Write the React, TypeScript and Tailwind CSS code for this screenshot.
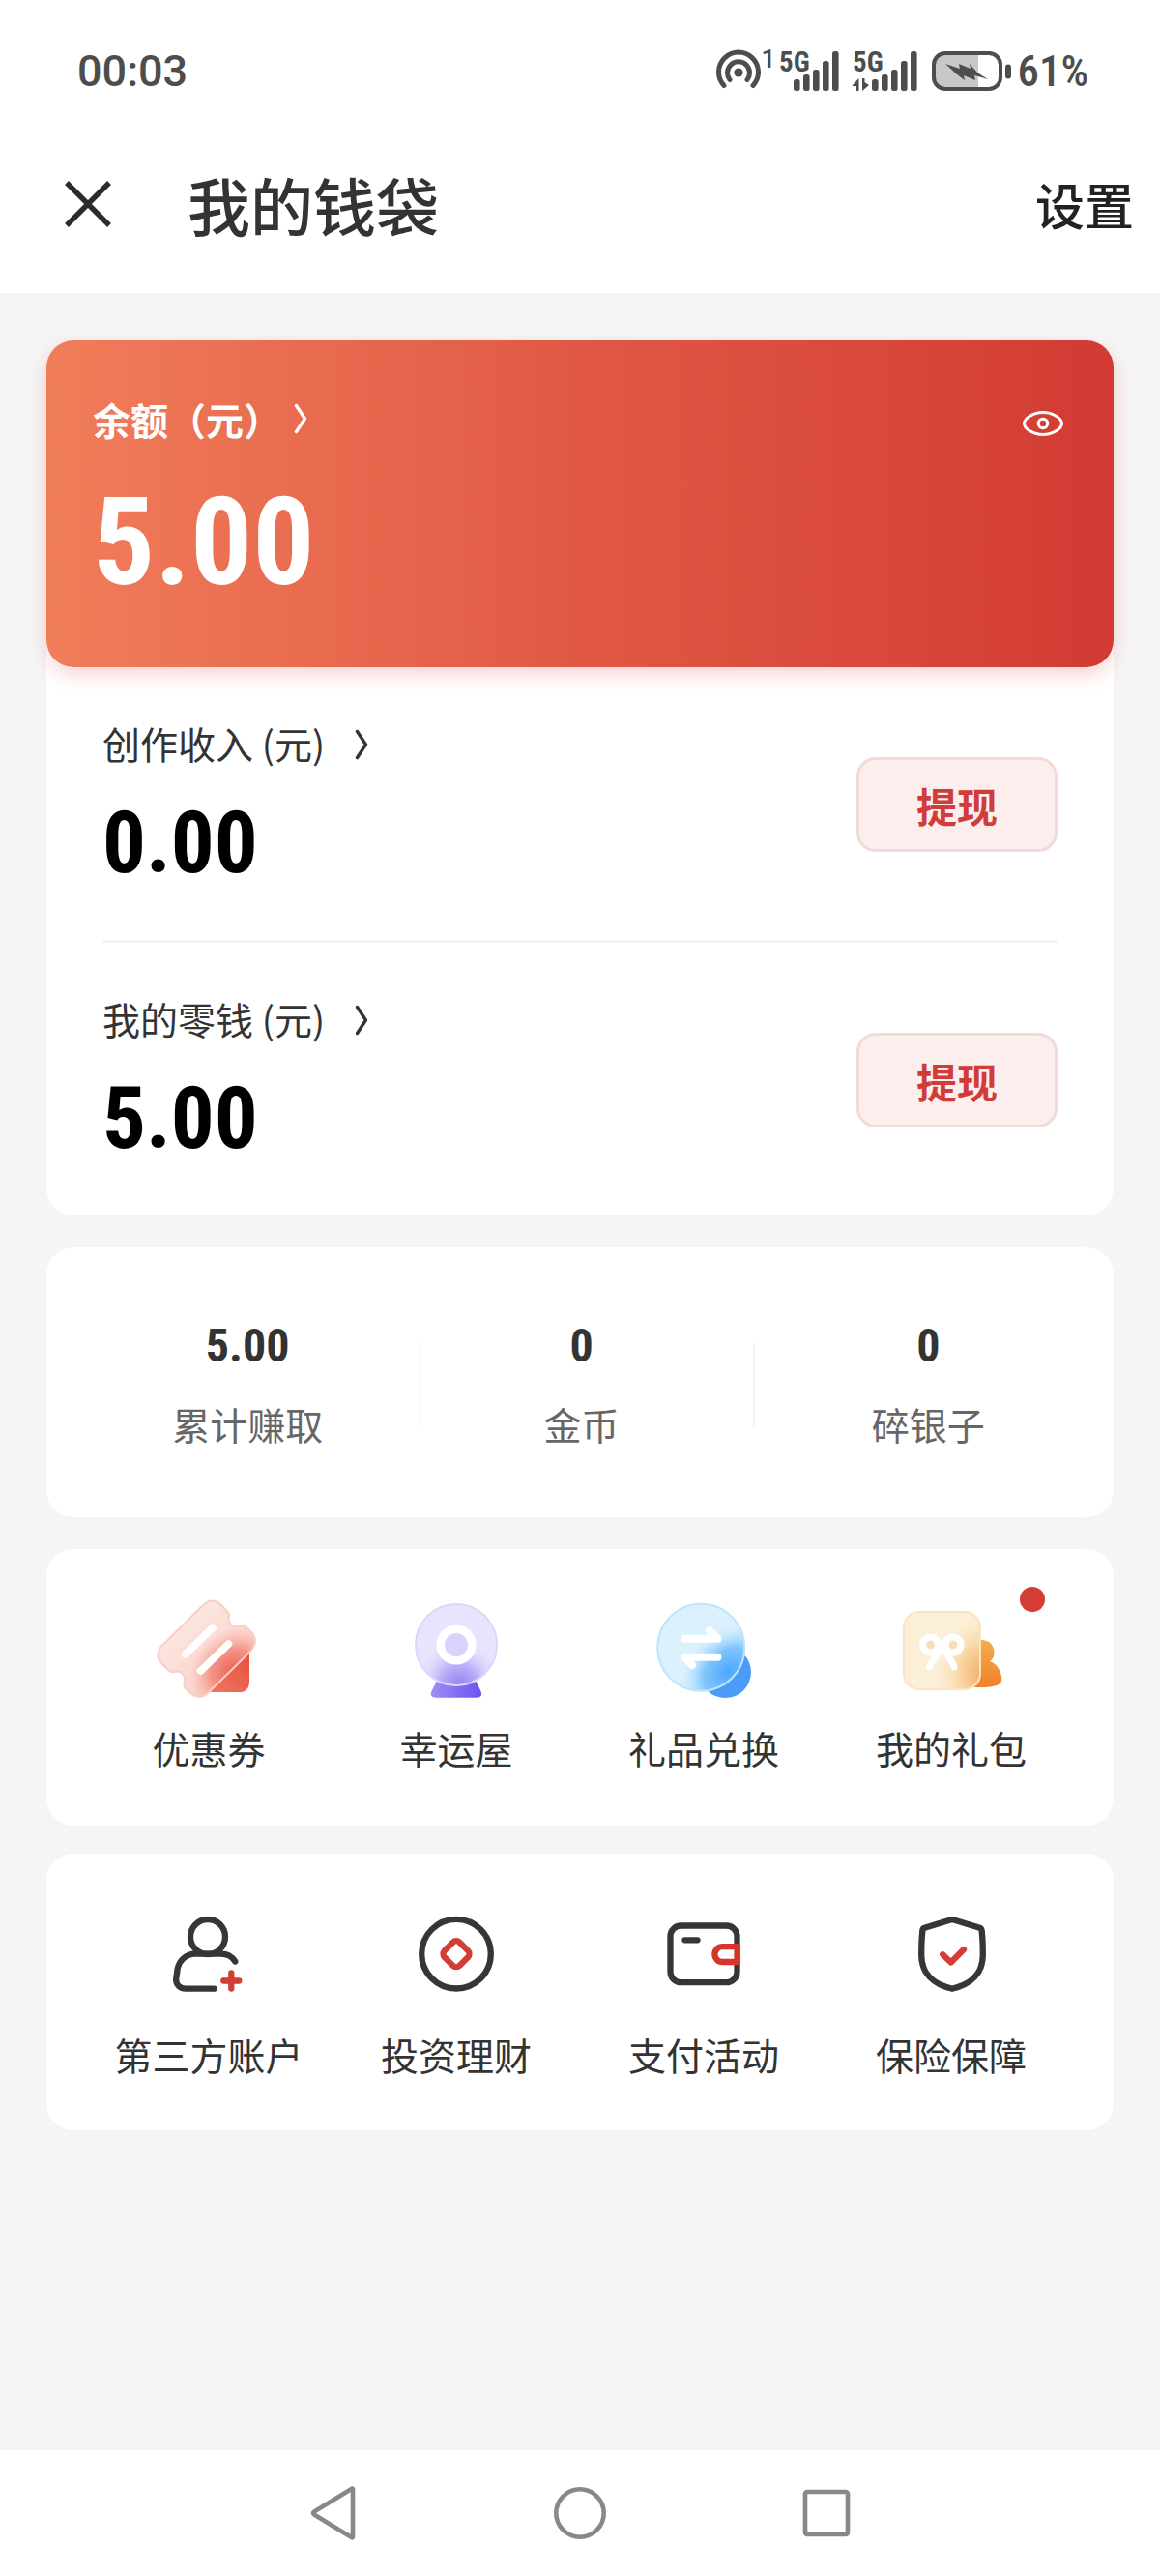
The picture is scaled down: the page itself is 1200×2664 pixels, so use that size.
import type { ReactNode } from "react";

const BARS = [
  { x: 0, y: 29 },
  { x: 10, y: 24 },
  { x: 20, y: 19 },
  { x: 30, y: 10 },
  { x: 40, y: 0 },
];

function HotspotIcon() {
  return (
    <svg className="h-[48px] w-[48px]" viewBox="0 0 48 48" fill="none" stroke="#4d4d4d" strokeWidth="5" strokeLinecap="round" aria-hidden="true">
      <circle cx="24" cy="25" r="4.6" fill="#4d4d4d" stroke="none" />
      <path d="M15 32.5A11.5 11.5 0 1 1 33 32.5" />
      <path d="M9 38.5A20.5 20.5 0 1 1 39 38.5" />
    </svg>
  );
}

function SignalIcon({ data }: { data?: boolean }) {
  return (
    <svg className="h-[62px] w-[68px]" viewBox="0 -10 68 62" fill="#4d4d4d" role="img" aria-label="5G">
      <text x="0" y="21" className="font-['Roboto_Condensed','Roboto',sans-serif] text-[29px] font-bold">5G</text>
      <g transform={data ? "translate(20 0)" : "translate(15 0)"}>
        {BARS.map((b) => (
          <rect key={b.x} x={b.x} y={b.y} width="6.6" height={41 - b.y} rx="2.5" />
        ))}
      </g>
      {data && <path d="M0 35L6.500 28V41H4V36H0ZM10 28H12.5V32L17 35L10 41Z" />}
    </svg>
  );
}

function BatteryIcon() {
  return (
    <svg className="h-[42px] w-[84px]" viewBox="0 0 84 42" aria-hidden="true">
      <path d="M14 3H48V38H14A11 11 0 0 1 3 27V14A11 11 0 0 1 14 3Z" fill="#c8c8c8" />
      <rect x="2" y="2" width="69" height="37" rx="12" fill="none" stroke="#4d4d4d" strokeWidth="4" />
      <rect x="76" y="13.5" width="6" height="15" rx="3" fill="#4d4d4d" />
      <path d="M14 13L29 18L28 13L40 18L39 13L47 22L58 29L44 25L45 30L33 25L34 30L26 24Z" fill="#4d4d4d" />
    </svg>
  );
}

function Chevron({ tone }: { tone: string }) {
  return (
    <svg className={tone} viewBox="0 0 16 32" fill="none" stroke="currentColor" strokeWidth="3.4" strokeLinecap="round" strokeLinejoin="round" aria-hidden="true">
      <path d="M3.5 2.5L12.5 16L3.5 29.5" />
    </svg>
  );
}

function CouponIcon() {
  const shape =
    "M10.7 57.7L53.5 15.5Q64 6 73 15L79 21.5Q82 24 80.500 28C80 35 87 39.5 92 36.5Q96 35 99 38L105 44Q111 51 105 60L102 64L59 106Q51 113.5 42 107L36 101Q33.5 98 35 93C36 86 30 82.5 25 84Q21 85 18 82L11 75Q4 66.5 10.7 57.7Z";
  return (
    <svg className="size-[120px]" viewBox="0 0 120 120" fill="none" aria-hidden="true">
      <defs>
        <linearGradient id="coupon-back" x1="65" y1="105" x2="102" y2="65" gradientUnits="userSpaceOnUse">
          <stop stopColor="#ef7560" />
          <stop offset="1" stopColor="#e8503f" />
        </linearGradient>
        <linearGradient id="coupon-base" x1="30" y1="30" x2="80" y2="90" gradientUnits="userSpaceOnUse">
          <stop stopColor="#fce6e1" />
          <stop offset="1" stopColor="#fad3cb" />
        </linearGradient>
        <radialGradient id="coupon-glow" cx="0" cy="0" r="1" gradientUnits="userSpaceOnUse" gradientTransform="translate(84 82) rotate(-45) scale(48 40)">
          <stop stopColor="#ec6353" />
          <stop offset="0.5" stopColor="#f07f70" stopOpacity="0.75" />
          <stop offset="1" stopColor="#f7aca0" stopOpacity="0" />
        </radialGradient>
      </defs>
      <path d="M102 58V94Q102 105 91 105H56Z" fill="url(#coupon-back)" />
      <path d={shape} fill="url(#coupon-base)" />
      <path d={shape} fill="url(#coupon-glow)" stroke="#f8cfc7" strokeWidth="2" />
      <path d="M64 38.5L35.5 66M80.5 55L51.5 83" stroke="#fff" strokeWidth="7.5" strokeLinecap="round" />
    </svg>
  );
}

function LuckyIcon() {
  return (
    <svg className="size-[120px]" viewBox="0 0 120 120" fill="none" aria-hidden="true">
      <defs>
        <linearGradient id="lucky-base" x1="34" y1="100" x2="86" y2="104" gradientUnits="userSpaceOnUse">
          <stop stopColor="#9c8ef5" />
          <stop offset="1" stopColor="#6c52f2" />
        </linearGradient>
        <radialGradient id="lucky-glow" cx="0" cy="0" r="1" gradientUnits="userSpaceOnUse" gradientTransform="translate(63 98) scale(44 46)">
          <stop stopColor="#8f7ff4" />
          <stop offset="0.45" stopColor="#b0a5f8" stopOpacity="0.85" />
          <stop offset="1" stopColor="#dcd7fc" stopOpacity="0" />
        </radialGradient>
      </defs>
      <path d="M40 93H80L85.5 104Q88 110.7 81 110.7H39Q32 110.7 34.5 104Z" fill="url(#lucky-base)" />
      <circle cx="60" cy="56" r="42" fill="#e8e4fd" />
      <circle cx="60" cy="56" r="42" fill="url(#lucky-glow)" stroke="#dcd7fa" strokeWidth="2" />
      <circle cx="60" cy="56" r="16.3" fill="#d9d3fb" stroke="#fff" strokeWidth="8.6" />
    </svg>
  );
}

function ExchangeIcon() {
  return (
    <svg className="size-[120px]" viewBox="0 0 120 120" fill="none" aria-hidden="true">
      <defs>
        <radialGradient id="exchange-glow" cx="0" cy="0" r="1" gradientUnits="userSpaceOnUse" gradientTransform="translate(86 84) rotate(-42) scale(56 44)">
          <stop stopColor="#4ba7fb" />
          <stop offset="0.5" stopColor="#74c0fd" stopOpacity="0.9" />
          <stop offset="1" stopColor="#c4e7fe" stopOpacity="0" />
        </radialGradient>
      </defs>
      <circle cx="82.3" cy="84.3" r="26.7" fill="#4a9cf8" />
      <circle cx="57.3" cy="58.7" r="45" fill="#dcf1fe" />
      <circle cx="57.3" cy="58.7" r="45" fill="url(#exchange-glow)" stroke="#bde5fb" strokeWidth="2" />
      <path d="M40.5 49.7H74.5L66 41.5M74.5 68.7H40.5L48 77" stroke="#fff" strokeWidth="8" strokeLinecap="round" strokeLinejoin="round" />
    </svg>
  );
}

function GiftIcon() {
  return (
    <svg className="size-[120px]" viewBox="0 0 120 120" fill="none" aria-hidden="true">
      <defs>
        <linearGradient id="gift-back" x1="95" y1="50" x2="98" y2="100" gradientUnits="userSpaceOnUse">
          <stop stopColor="#f2ae4a" />
          <stop offset="1" stopColor="#f2812c" />
        </linearGradient>
        <radialGradient id="gift-glow" cx="0" cy="0" r="1" gradientUnits="userSpaceOnUse" gradientTransform="translate(94 86) scale(50 62)">
          <stop stopColor="#f3ab5c" />
          <stop offset="0.45" stopColor="#f7c98c" stopOpacity="0.8" />
          <stop offset="1" stopColor="#fbe3bd" stopOpacity="0" />
        </radialGradient>
      </defs>
      <path d="M78 51H91C100 51 104.5 57 104.5 64C104.5 69 102.5 71.5 100 73C108 76 112.3 84 112.3 92C112.3 98 103 100 92 100H70Z" fill="url(#gift-back)" />
      <rect x="11" y="22" width="79" height="80" rx="16" fill="#fcefd8" />
      <rect x="11" y="22" width="79" height="80" rx="16" fill="url(#gift-glow)" stroke="#fbe5c0" strokeWidth="2" />
      <g stroke="#fff" strokeWidth="7" strokeLinecap="round" fill="#f8dfb8">
        <circle cx="38.5" cy="56" r="8" />
        <circle cx="62" cy="56" r="8" />
        <path d="M47 57C48 67 40 71 37.5 79M54 57C53 67 61 71 63 79" fill="none" />
      </g>
    </svg>
  );
}

function AccountIcon() {
  return (
    <svg className="size-[120px]" viewBox="0 0 120 120" fill="none" stroke="#363636" strokeWidth="6.3" strokeLinecap="round" aria-hidden="true">
      <circle cx="59" cy="41" r="18" />
      <path d="M87.3 66.5C84 61.5 79 58.7 73 58.7H46C36 58.7 29 66 27.5 75L26.3 84C25.5 90 30 94.7 36 94.7H65.5" />
      <path d="M83.3 78.5V94.5M75.3 86.5H91.3" stroke="#d23d36" />
    </svg>
  );
}

function CoinIcon() {
  return (
    <svg className="size-[120px]" viewBox="0 0 120 120" fill="none" strokeWidth="6.3" aria-hidden="true">
      <circle cx="60" cy="58.7" r="35.8" stroke="#363636" />
      <rect x="49" y="47.7" width="22" height="22" rx="5" transform="rotate(45 60 58.7)" stroke="#d23d36" />
    </svg>
  );
}

function WalletIcon() {
  return (
    <svg className="size-[120px]" viewBox="0 0 120 120" fill="none" stroke="#363636" strokeWidth="6.3" strokeLinecap="round" aria-hidden="true">
      <rect x="25.5" y="29.5" width="69" height="58.7" rx="11" />
      <path d="M40.5 44.3H53.5" />
      <path d="M94.5 51.2H79.3A7.9 7.9 0 0 0 79.3 67H94.5Z" fill="#fff" stroke="#d7342c" strokeLinecap="butt" />
    </svg>
  );
}

function ShieldIcon() {
  return (
    <svg className="size-[120px]" viewBox="0 0 120 120" fill="none" stroke="#363636" strokeWidth="6.3" strokeLinecap="round" strokeLinejoin="round" aria-hidden="true">
      <path d="M61 23L32.5 31.8Q30.5 32.5 30.4 34.5Q29.2 44 29.2 60C29.2 78 41 90 61 94.7C81 90 92.8 78 92.8 60Q92.8 44 91.6 34.5Q91.5 32.5 89.5 31.8Z" />
      <path d="M51.2 59.3L59.7 67.5L73 54" stroke="#d23d36" />
    </svg>
  );
}

function AmountRow({ label, amount }: { label: string; amount: string }) {
  return (
    <div className="flex items-center justify-between pt-[50px] pb-[48px]">
      <div>
        <a href="#detail" className="flex items-center gap-[30px] text-[39px] leading-[56px] text-[#333]">
          <span>{label}</span>
          <Chevron tone="mt-1 h-8 w-4 text-[#333]" />
        </a>
        <p className="mt-6 font-['Roboto_Condensed','Roboto',sans-serif] text-[89px] leading-[104px] font-bold text-black">{amount}</p>
      </div>
      <button type="button" className="h-[98px] w-[208px] rounded-[20px] border-3 border-[#f2dada] bg-[#fceeec] text-[42px] font-bold text-[#d03c38]">
        提现
      </button>
    </div>
  );
}

function Shortcut({ label, icon, dot }: { label: string; icon: ReactNode; dot?: boolean }) {
  return (
    <button type="button" className="flex flex-col items-center gap-4">
      <span className="relative">
        {icon}
        {dot && <span className="absolute -top-1 -right-[37px] size-[26px] rounded-full bg-[#d23d34]" />}
      </span>
      <span className="text-[39px] leading-[52px] whitespace-nowrap text-[#333]">{label}</span>
    </button>
  );
}

function Stat({ value, label }: { value: string; label: string }) {
  return (
    <div className="flex flex-col items-center gap-7">
      <span className="font-['Roboto_Condensed','Roboto',sans-serif] text-[48px] leading-[52px] font-bold text-[#333]">{value}</span>
      <span className="text-[39px] leading-[52px] text-[#666]">{label}</span>
    </div>
  );
}

export default function App() {
  return (
    <div className="flex min-h-screen flex-col bg-[#f5f5f5] font-['Noto_Sans_CJK_SC',sans-serif]">
      <header className="bg-white">
        <div className="flex h-[147px] items-center justify-between pr-[74px] pl-20 font-['Roboto',sans-serif] text-[45px] font-medium text-[#4d4d4d]">
          <time>00:03</time>
          <div className="flex items-center">
            <HotspotIcon />
            <span className="mr-1 self-start pt-1 text-[26px] leading-[34px]">1</span>
            <SignalIcon />
            <span className="w-2" />
            <SignalIcon data />
            <span className="w-[14px]" />
            <BatteryIcon />
            <span className="ml-1 font-['Roboto_Condensed','Roboto',sans-serif]">61%</span>
          </div>
        </div>
        <div className="flex h-[156px] items-center pr-[27px] pb-7 pl-[66px]">
          <button type="button" aria-label="关闭" className="mr-[78px]">
            <svg className="size-[50px]" viewBox="0 0 50 50" stroke="#2b2b2b" strokeWidth="5.5" aria-hidden="true">
              <path d="M3 3L47 47M47 3L3 47" />
            </svg>
          </button>
          <h1 className="grow text-[65px] leading-[80px] font-medium text-[#333]">我的钱袋</h1>
          <a href="#settings" className="text-[51px] leading-[80px] font-medium text-[#222]">设置</a>
        </div>
      </header>

      <main className="flex grow flex-col gap-[33px] px-12 pt-[49px]">
        <section className="rounded-[28px] bg-white">
          <div className="flex h-[338px] items-start justify-between rounded-[28px] bg-linear-to-r from-[#f07d5a] via-[#e05845] to-[#d23a33] px-12 pt-[53px] text-white shadow-[0_8px_20px_rgba(232,60,60,0.22)]">
            <div>
              <a href="#balance" className="flex items-center gap-3 text-[39px] leading-[56px] font-bold">
                <span>余额（元）</span>
                <Chevron tone="h-8 w-4 text-white" />
              </a>
              <p className="mt-[30px] font-['Roboto_Condensed','Roboto',sans-serif] text-[127px] leading-[140px] font-bold">5.00</p>
            </div>
            <button type="button" aria-label="隐藏余额" className="mt-[17px]">
              <svg className="h-8 w-[50px]" viewBox="0 0 50 32" fill="none" stroke="#fff" strokeWidth="3" aria-hidden="true">
                <path d="M5.5 16C5.5 10.5 15 4.5 25 4.5S44.5 10.5 44.5 16S35 27.5 25 27.5S5.5 21.5 5.5 16Z" />
                <circle cx="25" cy="16" r="4.7" />
              </svg>
            </button>
          </div>
          <div className="px-[58px]">
            <AmountRow label="创作收入 (元)" amount="0.00" />
            <hr className="border-t-3 border-[#f5f5f5]" />
            <AmountRow label="我的零钱 (元)" amount="5.00" />
          </div>
        </section>

        <section className="flex h-[279px] items-center rounded-[28px] bg-white pt-1">
          <div className="w-[35%] pl-[30px]">
            <Stat value="5.00" label="累计赚取" />
          </div>
          <div className="h-[88px] w-[2px] bg-[#f5f5f5]" />
          <div className="w-[31%] pr-3">
            <Stat value="0" label="金币" />
          </div>
          <div className="h-[88px] w-[2px] bg-[#f5f5f5]" />
          <div className="grow pr-3">
            <Stat value="0" label="碎银子" />
          </div>
        </section>

        <div className="flex flex-col gap-[29px]">
          <section className="grid grid-cols-4 rounded-[28px] bg-white px-10 pt-[43px] pb-[55px]">
            <Shortcut label="优惠券" icon={<CouponIcon />} />
            <Shortcut label="幸运屋" icon={<LuckyIcon />} />
            <Shortcut label="礼品兑换" icon={<ExchangeIcon />} />
            <Shortcut label="我的礼包" icon={<GiftIcon />} dot />
          </section>

          <section className="grid grid-cols-4 rounded-[28px] bg-white px-10 pt-[45px] pb-[53px]">
            <Shortcut label="第三方账户" icon={<AccountIcon />} />
            <Shortcut label="投资理财" icon={<CoinIcon />} />
            <Shortcut label="支付活动" icon={<WalletIcon />} />
            <Shortcut label="保险保障" icon={<ShieldIcon />} />
          </section>
        </div>
      </main>

      <nav className="flex h-[130px] items-center justify-center bg-white" aria-label="系统导航">
        <button type="button" aria-label="返回" className="flex w-[255px] justify-center">
          <svg className="size-[60px]" viewBox="0 0 60 60" fill="none" stroke="#888" strokeWidth="4.6" strokeLinejoin="round" aria-hidden="true">
            <path d="M50 5.5V54.5Q50 56 48.5 55L10 31.5Q8 30 10 28.5L48.5 5Q50 4 50 5.5Z" />
          </svg>
        </button>
        <button type="button" aria-label="主屏幕" className="flex w-[255px] justify-center">
          <svg className="size-[60px]" viewBox="0 0 60 60" fill="none" stroke="#888" strokeWidth="4.6" aria-hidden="true">
            <circle cx="30" cy="30" r="24.7" />
          </svg>
        </button>
        <button type="button" aria-label="最近任务" className="flex w-[255px] justify-center">
          <svg className="size-[60px]" viewBox="0 0 60 60" fill="none" stroke="#888" strokeWidth="4.6" aria-hidden="true">
            <rect x="8" y="8" width="44" height="44" rx="2" />
          </svg>
        </button>
      </nav>
    </div>
  );
}
